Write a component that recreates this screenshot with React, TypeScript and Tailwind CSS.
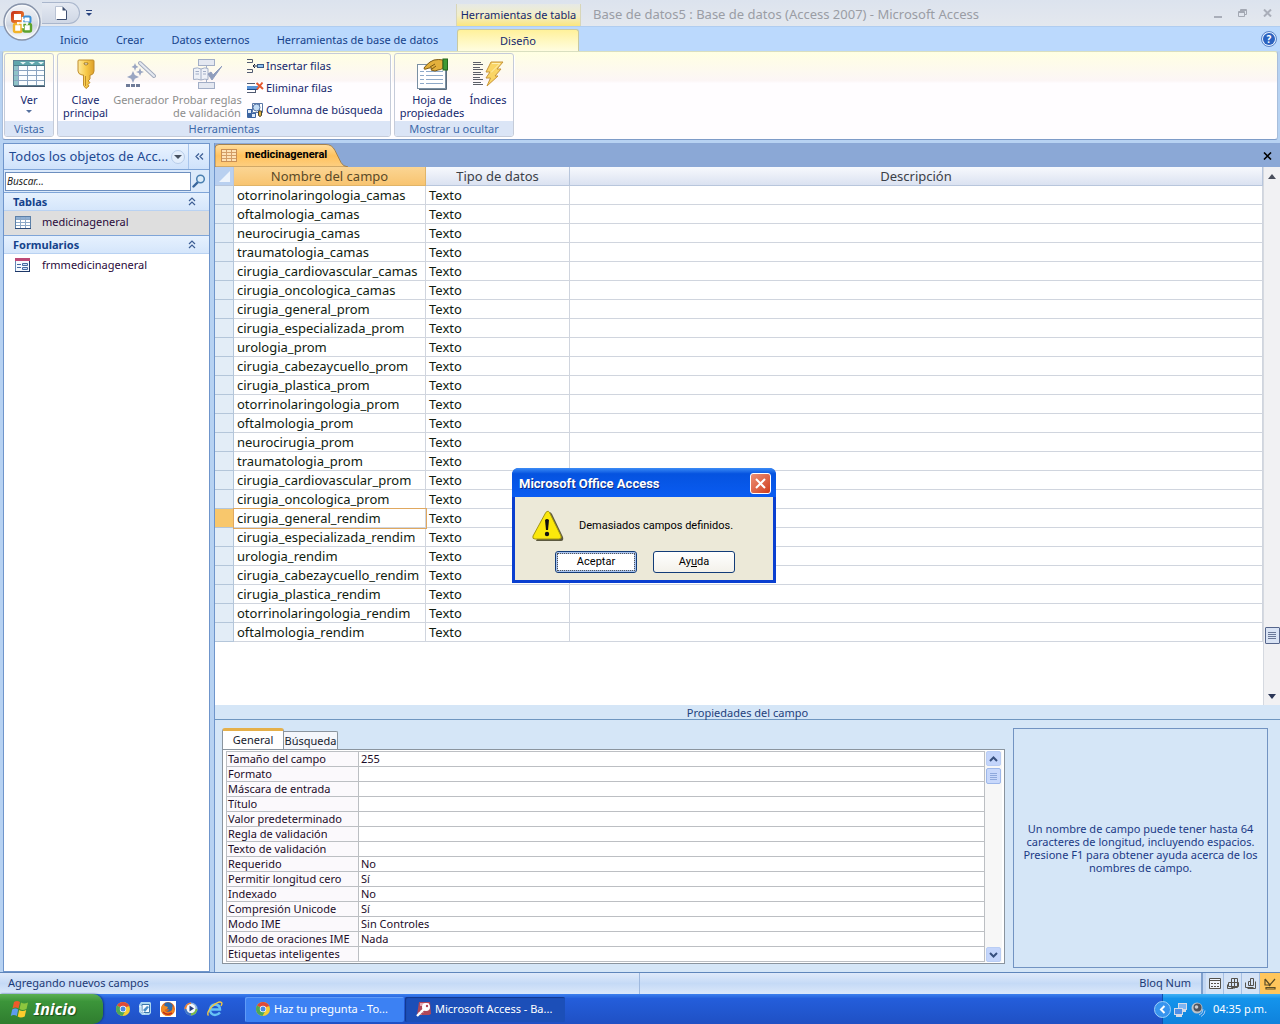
import React from "react";

const fields = [
  "otorrinolaringologia_camas",
  "oftalmologia_camas",
  "neurocirugia_camas",
  "traumatologia_camas",
  "cirugia_cardiovascular_camas",
  "cirugia_oncologica_camas",
  "cirugia_general_prom",
  "cirugia_especializada_prom",
  "urologia_prom",
  "cirugia_cabezaycuello_prom",
  "cirugia_plastica_prom",
  "otorrinolaringologia_prom",
  "oftalmologia_prom",
  "neurocirugia_prom",
  "traumatologia_prom",
  "cirugia_cardiovascular_prom",
  "cirugia_oncologica_prom",
  "cirugia_general_rendim",
  "cirugia_especializada_rendim",
  "urologia_rendim",
  "cirugia_cabezaycuello_rendim",
  "cirugia_plastica_rendim",
  "otorrinolaringologia_rendim",
  "oftalmologia_rendim",
];
const ACTIVE_FIELD = "cirugia_general_rendim";

const properties: [string, string][] = [
  ["Tamaño del campo", "255"],
  ["Formato", ""],
  ["Máscara de entrada", ""],
  ["Título", ""],
  ["Valor predeterminado", ""],
  ["Regla de validación", ""],
  ["Texto de validación", ""],
  ["Requerido", "No"],
  ["Permitir longitud cero", "Sí"],
  ["Indexado", "No"],
  ["Compresión Unicode", "Sí"],
  ["Modo IME", "Sin Controles"],
  ["Modo de oraciones IME", "Nada"],
  ["Etiquetas inteligentes", ""],
];

/* ---------- icons ---------- */

function OfficeLogo() {
  return (
    <svg width="38" height="38" viewBox="0 0 38 38" aria-hidden="true">
      <defs>
        <linearGradient id="orb" x1="0" y1="0" x2="0" y2="1">
          <stop offset="0" stopColor="#f2f4f8" />
          <stop offset="0.45" stopColor="#dce1ea" />
          <stop offset="0.6" stopColor="#cdd4e0" />
          <stop offset="1" stopColor="#ffffff" />
        </linearGradient>
        <linearGradient id="ringRed" x1="0" y1="0" x2="1" y2="1">
          <stop offset="0" stopColor="#c9361a" />
          <stop offset="1" stopColor="#f08a32" />
        </linearGradient>
      </defs>
      <circle cx="19" cy="19" r="18" fill="url(#orb)" stroke="#8793aa" strokeWidth="1.4" />
      <circle cx="19" cy="19" r="16.500" fill="none" stroke="#f8fafc" strokeWidth="1" />
      <rect x="9.500" y="9.500" width="10" height="9" rx="1.500" fill="#fff" stroke="url(#ringRed)" strokeWidth="3" />
      <rect x="20.500" y="13.500" width="7" height="6" rx="1.500" fill="#fff" stroke="#3d8fd6" strokeWidth="2" />
      <rect x="11" y="21" width="7.500" height="8" rx="1.500" fill="#fff" stroke="#f2b32a" strokeWidth="2.400" />
      <rect x="20.500" y="21" width="7.500" height="7.500" rx="1.500" fill="#fff" stroke="#5da32c" strokeWidth="2.400" />
      <path d="M19.500 14v11M14 20h11.500" stroke="#fff" strokeWidth="1.600" />
      <path d="M19.500 16.500h2M19.500 24.500h1.500M15 19v2.500M24 19.500V22" stroke="#fff" strokeWidth="1.600" />
    </svg>
  );
}

function PageIcon() {
  return (
    <svg width="12" height="14" viewBox="0 0 12 14" aria-hidden="true">
      <path d="M.5.5h7l4 4v9H.5z" fill="#fff" stroke="#b9c2d3" />
      <path d="M11.500 4.500v9H2" fill="none" stroke="#3e4f70" />
      <path d="M7.500.5v4h4z" fill="#3e4f70" />
    </svg>
  );
}

function DatasheetIcon() {
  return (
    <svg width="32" height="28" viewBox="0 0 32 28" aria-hidden="true">
      <rect x=".5" y=".5" width="31" height="25" fill="#fbfdff" stroke="#5f8093" />
      <rect x="1" y="1" width="30" height="4" fill="#5fa5ab" />
      <rect x="1" y="5" width="4" height="20" fill="#8fc3c8" />
      <path d="M5.500 5v20M14.500 5v20M23.500 5v20M1 10.500h30M1 15.500h30M1 20.500h30" stroke="#8aa3c0" fill="none" />
      <path d="M1 5.500h30" stroke="#4c7f8c" />
      <path d="M7 2l3 2.500L13 2zM16 2l3 2.500L22 2zM25 2l3 2.500L31 2z" fill="#e6f4f4" />
      <path d="M1 26.500h31" stroke="#45566a" />
    </svg>
  );
}

function KeyIcon() {
  return (
    <svg width="18" height="32" viewBox="0 0 18 32" aria-hidden="true">
      <defs>
        <linearGradient id="gold" x1="0" y1="0" x2="1" y2="0">
          <stop offset="0" stopColor="#fdeaa0" />
          <stop offset="0.5" stopColor="#f8cb4a" />
          <stop offset="1" stopColor="#dd9f28" />
        </linearGradient>
      </defs>
      <path
        d="M2 2h14q1 0 1 1v10q0 3-3 4h-1v4l-2 2 2 1.500-2 2 1 1.500-3 2.500-2.500-3V17H5q-4-1-4-4V3q0-1 1-1z"
        fill="url(#gold)"
        stroke="#c08c2a"
      />
      <path d="M7 5h4q0 2-2 2T7 5z" fill="#fff" stroke="#8c6414" strokeWidth=".8" />
      <path d="M8.500 18v10" stroke="#c08c2a" />
    </svg>
  );
}

function WandIcon() {
  return (
    <svg width="30" height="28" viewBox="0 0 30 28" aria-hidden="true">
      <path d="M14 3l14 13" stroke="#a3abbd" strokeWidth="4" strokeLinecap="round" />
      <path d="M14 3l14 13" stroke="#e6eaf1" strokeWidth="2" strokeLinecap="round" />
      <g fill="#9aa6c2">
        <path d="M9 3l1 2.500L12.500 7 10 8l-1 3-1-3-2.500-1L8 5.500z" />
        <path d="M7 11l1.800 4L13 17l-4.200 1.800L7 23l-1.800-4.200L1 17l4.200-2z" />
        <path d="M14 8l1.200 3 2.800 1-2.800 1L14 16l-1.200-3L10 12l2.800-1z" />
      </g>
      <path d="M0 24h4v3H0zM5 24h4v3H5zM10 24h4v3h-4z" fill="#6f7b98" />
    </svg>
  );
}

function RulesIcon() {
  return (
    <svg width="30" height="30" viewBox="0 0 30 30" aria-hidden="true">
      <g fill="#e4e8f1" stroke="#a2aec6">
        <rect x="6.500" y=".5" width="16" height="6" />
        <rect x="6.500" y="23.500" width="16" height="6" />
        <path d="M14.500 7v3M14.500 20v3" />
        <path d="M1.500 9.500q4-1.500 7.500.5 4-2 7-.5v11q-3-1-7 .500-4-1.500-7.500-.500z" fill="#eef1f7" />
        <path d="M9 10v11M3.500 12.500H7M3.500 15H7M11 12.500h3M11 15h3" />
      </g>
      <path d="M16 15l4 6 10-14-9 9-2-3z" fill="#8f9dbd" stroke="#8f9dbd" />
    </svg>
  );
}

function InsertRowsIcon() {
  return (
    <svg width="17" height="16" viewBox="0 0 17 16" aria-hidden="true">
      <path d="M0 1.500h5.500v3H0M0 11.500h5.500v3H0" fill="none" stroke="#515b72" />
      <path d="M6 8h4M8 6L6 8l2 2" stroke="#17233d" fill="none" />
      <rect x="10.500" y="6.500" width="6" height="3" fill="#8fc1ee" stroke="#385987" />
    </svg>
  );
}

function DeleteRowsIcon() {
  return (
    <svg width="17" height="16" viewBox="0 0 17 16" aria-hidden="true">
      <path d="M0 3.500h8M0 12.500h8" fill="none" stroke="#515b72" />
      <path d="M8.500 10v3" stroke="#515b72" />
      <rect x="0" y="6" width="11" height="3" fill="#5b95d8" />
      <path d="M0 9.500h11" stroke="#1f4a86" />
      <path d="M9.500 3l6.500 6M15.500 2.500L10 9.500" stroke="#e4572e" strokeWidth="2" />
    </svg>
  );
}

function LookupIcon() {
  return (
    <svg width="17" height="17" viewBox="0 0 17 17" aria-hidden="true">
      <path d="M.5 7.500h8v8h-8zM.5 11.500h8M4.500 7.500v8" fill="#dfeaf8" stroke="#3c65a2" />
      <rect x="1" y="12" width="3" height="3" fill="#3c65a2" />
      <path d="M5.500 1.500h10v9h-10z" fill="#fff" stroke="#5b78a8" />
      <path d="M12.500 2v8" stroke="#5b78a8" />
      <circle cx="9.500" cy="5.500" r="3.500" fill="#c3dcf5" stroke="#5674a4" />
      <path d="M11.500 9v4.500q1.500 2 3 0V9z" fill="#e0b03b" stroke="#4a4331" />
    </svg>
  );
}

function PropertySheetIcon() {
  return (
    <svg width="31" height="32" viewBox="0 0 31 32" aria-hidden="true">
      <rect x=".5" y="6.500" width="28" height="24" fill="#fff" stroke="#7a90a3" />
      <path d="M29.500 8v23.500H2" fill="none" stroke="#5d6e7e" />
      <path d="M3 13.500h4M3 17.500h4M3 21.500h4M3 25.500h4M9 13.500h17M9 17.500h17M9 21.500h17M9 25.500h17" stroke="#8ea9c8" />
      <path
        d="M7 10q2-3 6-6l4-2q5-1 9 0v8q-2 2-5 2l-3 1-4-1 1-2-3 0-3 1q-2 1-2-1z"
        fill="#e3b03c"
        stroke="#7d5a12"
      />
      <path d="M13 9l5-3M15 11l4-3" stroke="#7d5a12" />
      <rect x="26" y="1" width="4.500" height="11" fill="#3f9a34" stroke="#22671d" />
    </svg>
  );
}

function IndexesIcon() {
  return (
    <svg width="31" height="26" viewBox="0 0 31 26" aria-hidden="true">
      <path
        d="M0 1.500h8M0 3.500h10M0 6.500h7M0 8.500h10M0 11.500h8M0 13.500h10M0 16.500h7M0 18.500h10M0 21.500h8M0 23.500h10"
        stroke="#5d6068"
      />
      <path d="M18 1h12l-6 7h4l-6 7h3L14 25l3.500-8H13l4-6h-4z" fill="#fad565" stroke="#c8953a" />
      <path d="M19 2.500h8l-9 9" stroke="#fff1b3" fill="none" />
    </svg>
  );
}

function TableIcon() {
  return (
    <svg width="16" height="13" viewBox="0 0 16 13" aria-hidden="true">
      <rect x=".5" y=".5" width="15" height="12" fill="#fff" stroke="#5c80a8" />
      <rect x="1" y="1" width="14" height="2" fill="#8fb0d4" />
      <path d="M5.500 1v11M10.500 1v11M1 3.500h14M1 6.500h14M1 9.500h14" stroke="#8da9c8" />
      <path d="M0 12.500h16" stroke="#2c4a78" />
    </svg>
  );
}

function OrangeTableIcon() {
  return (
    <svg width="16" height="13" viewBox="0 0 16 13" aria-hidden="true">
      <rect x=".5" y=".5" width="15" height="12" fill="#fde2b6" stroke="#c98f54" />
      <path d="M5.500 1v11M10.500 1v11M1 3.500h14M1 6.500h14M1 9.500h14" stroke="#d39e68" />
    </svg>
  );
}

function FormIcon() {
  return (
    <svg width="16" height="14" viewBox="0 0 16 14" aria-hidden="true">
      <rect x=".5" y=".5" width="14" height="13" fill="#f5f9fe" stroke="#6285b3" />
      <rect x="0" y="0" width="15" height="3" fill="#bd4a77" />
      <path d="M2 6.500h4M2 9.500h4" stroke="#4469a0" />
      <path d="M7.500 5.500h5v2h-5zM7.500 9.500h5v2h-5z" fill="#cfe0f6" stroke="#4469a0" />
      <path d="M0 13.500h15M14.500 3v11" stroke="#1d3767" />
    </svg>
  );
}

function SearchIcon() {
  return (
    <svg width="14" height="14" viewBox="0 0 14 14" aria-hidden="true">
      <path d="M6 8L1.500 12.500" stroke="#38659c" strokeWidth="2.400" strokeLinecap="round" />
      <circle cx="8.500" cy="5" r="3.800" fill="#dcecf9" stroke="#4a7fb0" strokeWidth="1.500" />
    </svg>
  );
}

function DoubleChevronUp() {
  return (
    <svg width="8" height="9" viewBox="0 0 8 9" aria-hidden="true">
      <path d="M1 4l3-3 3 3M1 8l3-3 3 3" fill="none" stroke="#3d5e94" strokeWidth="1.200" />
    </svg>
  );
}

function HelpIcon() {
  return (
    <span className="flex h-3 w-3 items-center justify-center rounded-full bg-[#2b62c0] text-[10px] leading-none font-bold text-white ring-1 ring-[#eaf2fd] outline-1 outline-offset-1 outline-[#5b84c8]">
      ?
    </span>
  );
}

function WarningIcon() {
  return (
    <svg width="32" height="32" viewBox="0 0 32 32" aria-hidden="true">
      <path d="M17 2q2 0 3 2l11 23q1 4-2 4H4z" fill="#5c5940" />
      <path d="M15 1.500q1.500-1 2.500 1L29 26q1 3-2 3H3q-3 0-2-3L13.500 3q.5-1 1.500-1.500z" fill="#fbe80c" stroke="#a29513" />
      <path d="M13 10q2-2 4 0l-1 10h-2z" fill="#111" />
      <circle cx="15" cy="24" r="2.200" fill="#111" />
    </svg>
  );
}

function ChromeIcon() {
  return (
    <svg width="14" height="14" viewBox="0 0 14 14" aria-hidden="true">
      <circle cx="7" cy="7" r="7" fill="#f6cd33" />
      <path d="M7 7L1 3.500a7 7 0 0 1 12 0z" fill="#dd4a3a" />
      <path d="M1 3.500A7 7 0 0 0 6.500 14L9.500 8.500 7 7z" fill="#4aa859" />
      <path d="M7 3.800h6.200" stroke="#dd4a3a" />
      <circle cx="7" cy="7" r="3.200" fill="#fff" />
      <circle cx="7" cy="7" r="2.500" fill="#4689e6" />
    </svg>
  );
}

function DesktopIcon() {
  return (
    <svg width="14" height="14" viewBox="0 0 14 14" aria-hidden="true">
      <path d="M3 0h9l1 1v10l-2 2H4L1 10V3z" fill="#a9d5ef" />
      <path d="M4 2.500h7.500v8H4z" fill="#f6fbff" stroke="#3c79ad" />
      <path d="M5 8l4-4 2 1-4 5z" fill="#4a8fc6" />
      <path d="M1 5l2-1v5l4 3" stroke="#e4f3fc" fill="none" />
    </svg>
  );
}

function FirefoxIcon() {
  return (
    <svg width="16" height="16" viewBox="0 0 16 16" aria-hidden="true">
      <path d="M0 0h16v16H0z" fill="#fff" />
      <circle cx="8" cy="8" r="7" fill="#e2641a" />
      <path d="M5 2q4-2 7 1 2 3 0 6-3 3-6 1 3 0 3-2-2 1-4-1L4 5z" fill="#2d6aad" />
      <path d="M1.200 6q1-1 2-2.500L5 5l3 1-1 2q-3 0-2 2 3 3 7 0 1-3 0-5 3 3 1.500 6.500-2 3.500-6 3.500-5-.5-6.300-5z" fill="#ef8a22" />
      <path d="M3 11q4 4 9 1" stroke="#c22d1b" fill="none" strokeWidth="1.500" />
    </svg>
  );
}

function MediaPlayerIcon() {
  return (
    <svg width="15" height="14" viewBox="0 0 15 14" aria-hidden="true">
      <circle cx="7" cy="7" r="6.500" fill="#92b5dc" />
      <path d="M7 .5A6.500 6.500 0 0 0 .5 7H3a4 4 0 0 1 4-4z" fill="#ea7d33" />
      <path d="M.5 7A6.500 6.500 0 0 0 7 13.500V11a4 4 0 0 1-4-4z" fill="#3f75c6" />
      <path d="M7 13.500A6.500 6.500 0 0 0 13.500 7H11a4 4 0 0 1-4 4z" fill="#79b84c" />
      <circle cx="7" cy="6.500" r="4.500" fill="#f5f9fd" />
      <path d="M5.500 3.500L10 6.500 5.500 9.500z" fill="#263f80" />
    </svg>
  );
}

function ExplorerIcon() {
  return (
    <svg width="16" height="16" viewBox="0 0 16 16" aria-hidden="true">
      <path d="M13 11.500Q11 14 8 14q-5-.5-5-5.500Q3.500 4 8.200 3.500 13 4 13 8.500H4" fill="none" stroke="#67c3f5" strokeWidth="2.400" />
      <path d="M1.500 14.500Q-1 12 5 5.500 12-.5 14.500 1.500q1 1-.5 3.500" fill="none" stroke="#f2c744" strokeWidth="1.400" />
    </svg>
  );
}

function AccessIcon() {
  return (
    <svg width="16" height="16" viewBox="0 0 16 16" aria-hidden="true">
      <path d="M3 1h11l1 12-2 1H1z" fill="#b0485a" />
      <path d="M4 2h9v3H4z" fill="#e3a3ad" />
      <circle cx="10" cy="6" r="4" fill="#fff" />
      <circle cx="11" cy="5" r="1.200" fill="#b0485a" />
      <path d="M8 8L1 15" stroke="#fff" strokeWidth="2.400" />
      <path d="M3 11.500l2 2M5 9.500l2 2" stroke="#fff" />
    </svg>
  );
}

function WindowsFlag() {
  return (
    <svg width="20" height="18" viewBox="0 0 20 18" aria-hidden="true">
      <path d="M4 2q3-2 6 0L8.500 8.500q-3-2-6 0z" fill="#ee5a2b" />
      <path d="M11 2.500q3 2 7 0L16.500 9q-4 2-7 0z" fill="#8cc63e" />
      <path d="M2.200 9.500q3-2 6 0L6.800 16q-3-2-6 0z" fill="#5d9cf0" />
      <path d="M9.200 10q3 2 7 0L14.700 16.500q-4 2-7 0z" fill="#fbcd2d" />
    </svg>
  );
}

function NetworkIcon() {
  return (
    <svg width="15" height="15" viewBox="0 0 15 15" aria-hidden="true">
      <rect x="5.500" y="1.500" width="8" height="6" fill="#7fb5f2" stroke="#d6dce8" />
      <path d="M9 9h4" stroke="#d6dce8" strokeWidth="2" />
      <rect x="1.500" y="6.500" width="8" height="6" fill="#4f8fe6" stroke="#d6dce8" />
      <path d="M3 14h6" stroke="#d6dce8" strokeWidth="2" />
    </svg>
  );
}

function VolumeIcon() {
  return (
    <svg width="15" height="15" viewBox="0 0 15 15" aria-hidden="true">
      <circle cx="6" cy="6" r="5.500" fill="#bfc3c9" />
      <circle cx="6.500" cy="5.500" r="4" fill="#4f545e" />
      <circle cx="5.500" cy="5" r="1.800" fill="#c9cdd4" />
      <path d="M8 13q4-1 4-6M10 14.500q4-2 4-6" stroke="#a9c9f4" fill="none" />
    </svg>
  );
}

const views = [
  {
    label: "Vista Hoja de datos",
    icon: (
      <svg width="12" height="11" viewBox="0 0 12 11" aria-hidden="true">
        <path d="M.5.5h11v10H.5zM.5 2.500h11" fill="#eef3fa" stroke="#55524c" />
        <path d="M2 5.500h2M5 5.500h2M8 5.500h2M2 8.500h2M5 8.500h2M8 8.500h2" stroke="#55524c" />
      </svg>
    ),
  },
  {
    label: "Vista Tabla dinámica",
    icon: (
      <svg width="12" height="12" viewBox="0 0 12 12" aria-hidden="true">
        <path d="M4.500.5h6v9h-6zM1.500 4.500h10v4h-10zM7.500.5v10M.5 6.500v4h6" fill="none" stroke="#55524c" />
      </svg>
    ),
  },
  {
    label: "Vista Gráfico dinámico",
    icon: (
      <svg width="12" height="12" viewBox="0 0 12 12" aria-hidden="true">
        <path d="M5.500.5h3v7h-5v-4h2zM5.500 2v5M10.500 3.500v7h-8M.5 4.500v5h8" fill="none" stroke="#55524c" />
      </svg>
    ),
  },
  {
    label: "Vista Diseño",
    icon: (
      <svg width="12" height="12" viewBox="0 0 12 12" aria-hidden="true">
        <path d="M1 1v6h5L1 1M11 1L5 8M2 9.500h9v1.500H2z" fill="none" stroke="#5a4c26" strokeWidth="1.200" />
      </svg>
    ),
  },
];

/* ---------- ribbon ---------- */

function RibbonGroup({ title, children }: { title: string; children: React.ReactNode }) {
  return (
    <section className="flex flex-col overflow-hidden rounded-[3px] border border-[#c5cbd9] shadow-[1px_1px_0_#ffffff]">
      <div className="flex flex-1">{children}</div>
      <h2 className="h-[15px] bg-[#dbe5f6] text-center text-[11px] leading-[16px] text-[#3e6aaa]">{title}</h2>
    </section>
  );
}

function BigButton({
  icon,
  lines,
  className,
  disabled,
  caret,
}: {
  icon: React.ReactNode;
  lines: string[];
  className: string;
  disabled?: boolean;
  caret?: boolean;
}) {
  return (
    <button
      type="button"
      disabled={disabled}
      className={`flex flex-col items-center text-[11px] leading-[13px] ${disabled ? "text-[#8d8d8d]" : "text-[#15286e]"} ${className}`}
    >
      <span className="flex h-[39px] items-center justify-center">{icon}</span>
      {lines.map((l) => (
        <span key={l} className="whitespace-nowrap">
          {l}
        </span>
      ))}
      {caret && <span className="mt-1 border-x-[3px] border-t-[3px] border-x-transparent border-t-[#56719f]" />}
    </button>
  );
}

function SmallButton({ icon, label }: { icon: React.ReactNode; label: string }) {
  return (
    <button type="button" className="flex h-[22px] items-center gap-[2px] text-[11px] whitespace-nowrap text-[#15286e]">
      <span className="flex w-[17px] justify-center">{icon}</span>
      {label}
    </button>
  );
}

function TitleBar() {
  return (
    <header className="flex h-[26px] items-stretch bg-linear-to-b from-[#dce3ee] to-[#e4e8ee]">
      <div className="flex w-[456px] items-start pt-[2px] pl-[42px]">
        <div className="flex h-[22px] w-[38px] items-center justify-center rounded-r-full border border-l-0 border-[#a9b6cc] bg-linear-to-b from-[#e4e9f2] to-[#cfd7e5]">
          <button type="button" aria-label="Nuevo">
            <PageIcon />
          </button>
        </div>
        <button type="button" aria-label="Personalizar barra" className="mt-2 ml-1.5 flex flex-col items-center gap-[2px]">
          <span className="h-px w-[6px] bg-[#27427e]" />
          <span className="border-x-[3px] border-t-[3px] border-x-transparent border-t-[#27427e]" />
        </button>
      </div>
      <div className="mt-1 flex w-[125px] items-center justify-center border-x border-[#d8d6b8] bg-linear-to-b from-[#e6e9e6] via-[#f2eec8] to-[#fbe67c] text-[11px] text-[#15286e]">
        Herramientas de tabla
      </div>
      <h1 className="ml-3 flex-1 truncate text-[13px] leading-[28px] text-[#9a9da5]">
        Base de datos5 : Base de datos (Access 2007) - Microsoft Access
      </h1>
      <div className="flex items-center gap-2 pr-1">
        <button type="button" aria-label="Minimizar" className="flex h-4 w-[17px] items-end justify-center pb-[3px]">
          <span className="h-[2px] w-2 bg-[#a9aeb9]" />
        </button>
        <button type="button" aria-label="Restaurar" className="flex h-4 w-[17px] items-center justify-center">
          <svg width="9" height="8" viewBox="0 0 9 8" aria-hidden="true">
            <path d="M.5 2.500h6v5h-6zM.5 3.500h6M2.500 2V.5h6v5H7M2.500 1.500h6" fill="none" stroke="#a3a8b3" />
          </svg>
        </button>
        <button type="button" aria-label="Cerrar" className="flex h-4 w-[17px] items-center justify-center">
          <svg width="9" height="8" viewBox="0 0 9 8" aria-hidden="true">
            <path d="M1 .5l7 7M8 .5l-7 7" stroke="#a9aeb9" strokeWidth="2" />
          </svg>
        </button>
      </div>
    </header>
  );
}

function RibbonTabs() {
  const tab = "text-center text-[11px] leading-[26px] text-[#15428b]";
  return (
    <nav className="flex h-[25px] items-start border-t border-[#b0cdf0] bg-[#bbd9fd] pl-[46px]">
      <button type="button" className={`w-14 ${tab}`}>Inicio</button>
      <button type="button" className={`w-14 ${tab}`}>Crear</button>
      <button type="button" className={`w-[105px] ${tab}`}>Datos externos</button>
      <button type="button" className={`w-[189px] ${tab}`}>Herramientas de base de datos</button>
      <button
        type="button"
        className="mt-[2px] ml-[5px] h-[22px] w-[122px] rounded-t-[3px] border border-b-0 border-[#c9c9a0] bg-linear-to-b from-[#fff19a] to-[#fffde0] text-[11px] leading-[20px] text-[#15286e]"
      >
        Diseño
      </button>
      <button type="button" aria-label="Ayuda" className="mr-[5px] ml-auto flex h-6 items-center">
        <HelpIcon />
      </button>
    </nav>
  );
}

function Ribbon() {
  return (
    <div className="bg-[#b7d2f2] px-[2px] pb-[3px]">
      <div className="flex h-[89px] gap-[3px] rounded-[3px] border border-t-[#d9dfc0] border-r-[#a9bedb] border-b-[#7e9cc8] border-l-[#a9bedb] bg-linear-to-b from-[#ffffe2] via-[#fcf6f6] via-33% to-[#fffdff] to-36% p-[1px] pb-[2px]">
        <RibbonGroup title="Vistas">
          <BigButton icon={<DatasheetIcon />} lines={["Ver"]} caret className="w-12" />
        </RibbonGroup>
        <RibbonGroup title="Herramientas">
          <BigButton icon={<KeyIcon />} lines={["Clave", "principal"]} className="w-[55px]" />
          <BigButton icon={<WandIcon />} lines={["Generador"]} disabled className="w-[56px]" />
          <BigButton icon={<RulesIcon />} lines={["Probar reglas", "de validación"]} disabled className="w-[76px]" />
          <div className="flex w-[145px] flex-col pt-[1px] pl-[2px]">
            <SmallButton icon={<InsertRowsIcon />} label="Insertar filas" />
            <SmallButton icon={<DeleteRowsIcon />} label="Eliminar filas" />
            <SmallButton icon={<LookupIcon />} label="Columna de búsqueda" />
          </div>
        </RibbonGroup>
        <RibbonGroup title="Mostrar u ocultar">
          <BigButton icon={<PropertySheetIcon />} lines={["Hoja de", "propiedades"]} className="w-[74px]" />
          <BigButton icon={<IndexesIcon />} lines={["Índices"]} className="mr-1.5 w-[38px]" />
        </RibbonGroup>
      </div>
    </div>
  );
}

/* ---------- navigation pane ---------- */

function NavSection({ title }: { title: string }) {
  return (
    <button
      type="button"
      className="flex h-[19px] w-full items-center justify-between border-t border-b border-t-[#7fa5d8] border-b-[#b9d2f2] bg-linear-to-b from-[#e6f1fe] to-[#d5e6fb] pr-[13px] pl-[9px] text-[11px] leading-[17px] font-bold text-[#15428b]"
    >
      {title}
      <DoubleChevronUp />
    </button>
  );
}

function NavPane() {
  return (
    <aside className="flex w-[207px] flex-col border border-[#6f95cb] bg-white">
      <div className="flex h-[25px] items-center bg-linear-to-b from-[#e9f3ff] to-[#cfe2fb] text-[#1e4a93]">
        <span className="flex-1 pl-[5px] text-[13px] whitespace-nowrap">Todos los objetos de Acc...</span>
        <button type="button" aria-label="Filtrar objetos" className="mr-[3px] flex h-[14px] w-[14px] items-center justify-center rounded-full border border-[#b8cdea] bg-[#e3eefc]">
          <span className="border-x-[4px] border-t-[4px] border-x-transparent border-t-[#46505f]" />
        </button>
        <button type="button" aria-label="Contraer panel" className="flex h-full w-[21px] items-center justify-center border-l border-[#a8c5ec]">
          <svg width="9" height="7" viewBox="0 0 9 7" aria-hidden="true">
            <path d="M4 .5l-3 3 3 3M8 .5l-3 3 3 3" fill="none" stroke="#3d5e94" strokeWidth="1.200" />
          </svg>
        </button>
      </div>
      <div className="flex h-[23px] items-center border-t border-[#7fa5d8] bg-[#dceafb]">
        <input
          aria-label="Buscar"
          placeholder="Buscar..."
          className="ml-[1px] h-[19px] w-[186px] min-w-0 border border-[#6d8fbf] bg-white px-px text-[10px] text-black italic outline-none placeholder:text-[#222]"
        />
        <button type="button" aria-label="Iniciar búsqueda" className="ml-px">
          <SearchIcon />
        </button>
      </div>
      <NavSection title="Tablas" />
      <a href="#medicinageneral" className="flex h-6 items-center gap-[11px] bg-[#dedede] pb-[2px] pl-[11px] text-[11px] text-[#2a0a3a]">
        <TableIcon />
        medicinageneral
      </a>
      <NavSection title="Formularios" />
      <a href="#frmmedicinageneral" className="flex h-[22px] items-center gap-[11px] pl-[11px] text-[11px] text-[#2a0a3a]">
        <FormIcon />
        frmmedicinageneral
      </a>
    </aside>
  );
}

/* ---------- document ---------- */

function DocumentTabs() {
  return (
    <div className="flex h-6 items-end justify-between bg-[#8ba8d6]">
      <div className="relative h-[23px] w-[133px]">
        <svg className="absolute inset-0" width="133" height="23" viewBox="0 0 133 23" aria-hidden="true">
          <defs>
            <linearGradient id="tabfill" x1="0" y1="0" x2="0" y2="1">
              <stop offset="0" stopColor="#ffdfa0" />
              <stop offset="0.5" stopColor="#ffc25e" />
              <stop offset="1" stopColor="#fdcf82" />
            </linearGradient>
          </defs>
          <path d="M0 23V4Q0 .5 4 .5H111q6 0 9 6l6 12q2 4 7 4.500z" fill="url(#tabfill)" stroke="#a5824d" />
        </svg>
        <button type="button" className="relative flex h-[22px] items-center gap-2 pl-[6px] font-['Roboto',sans-serif] text-[11px] font-bold text-black">
          <OrangeTableIcon />
          medicinageneral
        </button>
      </div>
      <button type="button" aria-label="Cerrar tabla" className="mr-2 flex h-[23px] items-center">
        <svg width="9" height="8" viewBox="0 0 9 8" aria-hidden="true">
          <path d="M1 .5l7 7M8 .5l-7 7" stroke="#000" strokeWidth="1.600" />
        </svg>
      </button>
    </div>
  );
}

function FieldGrid() {
  const line = "border-r border-b border-[#d0d5de]";
  const head = "border-r border-b border-[#b8c6dc] p-0 font-normal text-[#3b4048]";
  return (
    <div className="flex min-h-0 flex-1 bg-white">
      <div className="min-w-0 flex-1">
        <table className="w-full table-fixed border-separate border-spacing-0 text-[13px] leading-[18px]">
          <colgroup>
            <col className="w-[19px]" />
            <col className="w-48" />
            <col className="w-36" />
            <col />
          </colgroup>
          <thead>
            <tr className="h-[19px]">
              <th className={`${head} bg-[#b9d0f0]`} aria-label="Seleccionar todo">
                <svg width="18" height="18" viewBox="0 0 18 18" className="block" aria-hidden="true">
                  <path d="M15 4v11H4z" fill="#eef4fc" />
                </svg>
              </th>
              <th className="border-r border-b border-[#e0b468] bg-linear-to-b from-[#fbd593] to-[#f8c470] p-0 font-normal text-[#5a4a28]">Nombre del campo</th>
              <th className={`${head} bg-linear-to-b from-[#f7f9fd] to-[#dbe2f1]`}>Tipo de datos</th>
              <th className={`${head} bg-linear-to-b from-[#f7f9fd] to-[#dbe2f1]`}>Descripción</th>
            </tr>
          </thead>
          <tbody>
            {fields.map((f) => {
              const active = f === ACTIVE_FIELD;
              return (
                <tr key={f} className="h-[19px]">
                  <td className={`border-r border-b border-[#b4c6da] p-0 ${active ? "bg-[#f8c76c]" : "bg-[#e3edf7]"}`} />
                  <td className={`${line} py-0 pr-0 pl-[3px] whitespace-nowrap text-[#101c10] ${active ? "outline-1 outline-[#e0a860]" : ""}`}>
                    {f}
                  </td>
                  <td className={`${line} py-0 pr-0 pl-[3px] text-[#101c10]`}>Texto</td>
                  <td className={`${line} p-0`} />
                </tr>
              );
            })}
          </tbody>
        </table>
      </div>
      <div className="flex w-[17px] flex-col items-center border-l border-[#d5d9e0] bg-[#f1f1f3]">
        <button type="button" aria-label="Subir" className="flex h-[18px] items-center">
          <span className="border-x-[4px] border-b-[5px] border-x-transparent border-b-[#4a4f5c]" />
        </button>
        <div className="flex-1" />
        <button type="button" aria-label="Posición" className="mb-[43px] flex h-[17px] w-[15px] flex-col items-center justify-center gap-px rounded-[1px] border border-[#56668c] bg-[#d9e3f4]">
          <span className="h-px w-2 bg-[#6a7898]" />
          <span className="h-px w-2 bg-[#6a7898]" />
          <span className="h-px w-2 bg-[#6a7898]" />
          <span className="h-px w-2 bg-[#6a7898]" />
        </button>
        <button type="button" aria-label="Bajar" className="flex h-[18px] items-center">
          <span className="border-x-[4px] border-t-[5px] border-x-transparent border-t-[#2b3656]" />
        </button>
      </div>
    </div>
  );
}

function ScrollArrow({ up }: { up?: boolean }) {
  return (
    <button type="button" aria-label={up ? "Subir propiedades" : "Bajar propiedades"} className="flex h-[15px] w-[15px] items-center justify-center rounded-[2px] border border-[#b9cdf4] bg-[#c4d5fb]">
      <svg width="9" height="6" viewBox="0 0 9 6" aria-hidden="true">
        <path d={up ? "M1 5l3.500-3.500L8 5" : "M1 1l3.500 3.500L8 1"} fill="none" stroke="#38507e" strokeWidth="2" />
      </svg>
    </button>
  );
}

function PropertiesPanel() {
  return (
    <section className="bg-[#d5e6f7]">
      <h2 className="h-[15px] border-b border-[#6e96c0] text-center text-[11px] leading-[16px] text-[#1e3f7c]">Propiedades del campo</h2>
      <div className="flex gap-2 pt-2 pr-3 pb-1 pl-[7px]">
        <div className="min-w-0 flex-1 pb-1">
          <div className="flex items-end">
            <button type="button" className="h-[21px] w-[62px] rounded-t-[3px] border border-t-[3px] border-b-0 border-[#8a949e] border-t-[#e5b04a] bg-white text-[11px] leading-[14px] text-[#16222e]">
              General
            </button>
            <button type="button" className="h-[18px] w-[54px] rounded-tr-[2px] border border-b-0 border-l-0 border-[#8a949e] bg-[#f4f6fb] text-[11px] leading-[16px] whitespace-nowrap text-[#16222e]">
              Búsqueda
            </button>
          </div>
          <div className="flex border border-[#8a949e] bg-white pt-px pr-[2px] pb-px pl-[3px]">
            <table className="flex-1 table-fixed border-collapse text-[11px] leading-[14px]">
              <colgroup>
                <col className="w-[132px]" />
                <col />
              </colgroup>
              <tbody>
                {properties.map(([name, value]) => (
                  <tr key={name} className="h-[15px]">
                    <th className="w-[132px] border border-[#bcbfc3] bg-[#fbf9fc] py-0 pr-0 pl-px text-left font-normal whitespace-nowrap text-[#1c0c28]">{name}</th>
                    <td className="border border-[#bcbfc3] py-0 pr-0 pl-[2px] text-[#1c0c28]">{value}</td>
                  </tr>
                ))}
              </tbody>
            </table>
            <div className="flex w-[17px] flex-col items-center bg-[#f7f7f7]">
              <ScrollArrow up />
              <button type="button" aria-label="Posición de propiedades" className="mt-[2px] flex h-4 w-[15px] flex-col items-center justify-center gap-px rounded-[2px] border border-[#9db7ea] bg-[#c8d8fb]">
                <span className="h-px w-[7px] bg-[#8fa9dc]" />
                <span className="h-px w-[7px] bg-[#8fa9dc]" />
                <span className="h-px w-[7px] bg-[#8fa9dc]" />
                <span className="h-px w-[7px] bg-[#8fa9dc]" />
              </button>
              <div className="flex-1" />
              <ScrollArrow />
            </div>
          </div>
        </div>
        <p className="flex w-[255px] items-center justify-center border border-[#7293c2] px-2 text-center text-[11px] leading-[13px] text-[#1b3a86]">
          Un nombre de campo puede tener hasta 64 caracteres de longitud, incluyendo espacios. Presione F1 para obtener ayuda acerca de los nombres de campo.
        </p>
      </div>
    </section>
  );
}

/* ---------- bottom bars ---------- */

function StatusBar() {
  return (
    <footer className="flex h-[22px] items-stretch border-t border-[#5f86bb] bg-linear-to-b from-[#dfeafa] via-[#c5daf6] to-[#dbe8fa] text-[11px] leading-[20px] text-[#1c3975]">
      <span className="w-1/2 border-r border-[#9fb9de] pl-2">Agregando nuevos campos</span>
      <span className="ml-auto pr-[10px]">Bloq Num</span>
      <div className="flex border-l-2 border-[#7f9fcb] bg-[#c3d7f3] pl-[3px]">
        {views.map(({ label, icon }, i) => (
          <button
            key={label}
            type="button"
            aria-label={label}
            className={`flex items-center justify-center ${i === 3 ? "w-[20px] bg-[#ffc65c]" : "w-[18px] border-r border-[#a6bfe2] bg-[#d5e3f6]"}`}
          >
            {icon}
          </button>
        ))}
      </div>
    </footer>
  );
}

function Taskbar() {
  return (
    <footer className="flex h-[30px] items-stretch bg-linear-to-b from-[#3c80ee] via-[#245edb] via-15% to-[#1f50c4] text-white">
      <button
        type="button"
        className="flex w-[103px] items-center gap-1 rounded-r-[10px] bg-linear-to-b from-[#5cb052] via-[#3c953a] via-25% to-[#2f7d2f] pl-[10px] text-[16px] leading-none font-bold italic shadow-[1px_0_2px_#123a80] [text-shadow:1px_1px_1px_#1c4a1c]"
      >
        <WindowsFlag />
        Inicio
      </button>
      <div className="flex w-[142px] items-center gap-2 pl-[13px]">
        <a href="#chrome" aria-label="Chrome"><ChromeIcon /></a>
        <a href="#escritorio" aria-label="Escritorio"><DesktopIcon /></a>
        <a href="#firefox" aria-label="Firefox"><FirefoxIcon /></a>
        <a href="#reproductor" aria-label="Reproductor"><MediaPlayerIcon /></a>
        <a href="#explorer" aria-label="Explorador"><ExplorerIcon /></a>
      </div>
      <div className="flex items-center">
        <button type="button" className="flex h-[25px] w-[159px] items-center gap-1 rounded-[2px] bg-[#3c81f3] pl-[11px] text-[11px] whitespace-nowrap shadow-[inset_1px_1px_0_#5f9bf8]">
          <ChromeIcon />
          Haz tu pregunta - To...
        </button>
        <button type="button" className="ml-px flex h-[25px] w-[160px] items-center gap-[3px] rounded-[2px] bg-[#1c4fb8] pl-[11px] text-[11px] whitespace-nowrap shadow-[inset_1px_1px_1px_#12378c]">
          <AccessIcon />
          Microsoft Access - Ba...
        </button>
      </div>
      <div className="ml-auto flex w-[118px] items-center border-l border-[#0f4fae] bg-linear-to-b from-[#3fb2f5] via-[#1494ec] via-15% to-[#0f82dc]">
        <button type="button" aria-label="Mostrar iconos ocultos" className="-ml-[9px] flex h-[17px] w-[17px] items-center justify-center rounded-full border border-[#9fd0fa] bg-[#3794ee]">
          <svg width="7" height="9" viewBox="0 0 7 9" aria-hidden="true">
            <path d="M5.500 1L2 4.500 5.500 8" fill="none" stroke="#fff" strokeWidth="2" />
          </svg>
        </button>
        <span className="ml-[2px] flex gap-[3px]">
          <NetworkIcon />
          <VolumeIcon />
        </span>
        <time className="ml-[7px] text-[11px] whitespace-nowrap">04:35 p.m.</time>
      </div>
    </footer>
  );
}

function AlertDialog() {
  return (
    <div
      role="alertdialog"
      aria-labelledby="alert-title"
      aria-describedby="alert-text"
      className="absolute top-[468px] left-[512px] w-[264px] rounded-t-[7px] bg-[#0a3fd0] px-[3px] pb-[3px] font-['Roboto',sans-serif] text-[11px] text-black"
    >
      <div className="-mx-[3px] flex h-[29px] items-center justify-between rounded-t-[6px] bg-linear-to-b from-[#3b8bf5] via-[#0553e0] via-20% to-[#0a5cf2] pr-[5px] pl-[7px]">
        <h2 id="alert-title" className="pt-[3px] text-[13px] font-bold text-white [text-shadow:1px_1px_0_#0a2a80]">
          Microsoft Office Access
        </h2>
        <button type="button" aria-label="Cerrar" className="mt-[2px] flex h-[21px] w-[21px] items-center justify-center rounded-[3px] border border-white bg-linear-to-br from-[#ec8f74] to-[#cf3a17]">
          <svg width="11" height="11" viewBox="0 0 11 11" aria-hidden="true">
            <path d="M1 1l9 9M10 1l-9 9" stroke="#fff" strokeWidth="2" />
          </svg>
        </button>
      </div>
      <div className="bg-[#ece9d8] pt-[13px] pb-[7px]">
        <div className="flex items-center gap-[15px] pl-[17px]">
          <WarningIcon />
          <p id="alert-text">Demasiados campos definidos.</p>
        </div>
        <div className="mt-[9px] flex gap-4 pl-10">
          <button type="button" className="h-[22px] w-[82px] rounded-[3px] border border-[#123c78] bg-white p-px shadow-[inset_0_0_0_2px_#a9c3ee]">
            <span className="flex h-full items-center justify-center border border-dotted border-[#555]">Aceptar</span>
          </button>
          <button type="button" className="h-[22px] w-[82px] rounded-[3px] border border-[#123c78] bg-linear-to-b from-white to-[#f3f1ea]">
            Ay<u>u</u>da
          </button>
        </div>
      </div>
    </div>
  );
}

export default function App() {
  return (
    <div className="relative flex min-h-screen flex-col bg-[#b7d2f2] font-['Noto_Sans','Open_Sans',sans-serif]">
      <TitleBar />
      <RibbonTabs />
      <Ribbon />
      <button type="button" aria-label="Botón de Office" className="absolute top-[3px] left-[3px]">
        <OfficeLogo />
      </button>
      <main className="flex flex-1 gap-1 pl-[3px]">
        <NavPane />
        <div className="flex min-w-0 flex-1 flex-col border-l border-[#6f95cb]">
          <DocumentTabs />
          <FieldGrid />
          <PropertiesPanel />
        </div>
      </main>
      <StatusBar />
      <Taskbar />
      <AlertDialog />
    </div>
  );
}
